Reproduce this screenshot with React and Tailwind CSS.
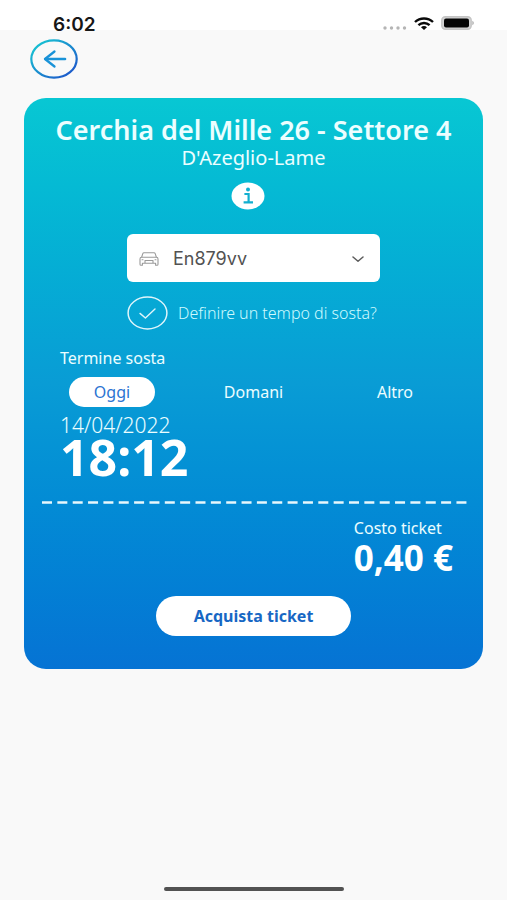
import { useState } from 'react';

const DAYS = ['Oggi', 'Domani', 'Altro'];

function StatusBar() {
  return (
    <div className="flex h-[30px] items-end justify-between bg-white pr-[33px] pl-[53px]">
      <span className="font-['Inter'] text-[19px] leading-[10px] font-semibold text-neutral-900">6:02</span>
      <div className="flex items-end gap-[7px]">
        <svg width="24" height="4" viewBox="0 0 24 4" fill="#b5b5b5">
          <circle cx="2" cy="2" r="1.7" />
          <circle cx="8.5" cy="2" r="1.7" />
          <circle cx="15" cy="2" r="1.7" />
          <circle cx="21.5" cy="2" r="1.7" />
        </svg>
        <svg width="20" height="13" viewBox="0 0 20 13" fill="none" stroke="#0a0a0a" strokeWidth="2.4">
          <path d="M1 5C6 0.3 14 0.3 19 5" />
          <path d="M4.4 8.2C7.6 5.2 12.4 5.2 15.6 8.2" />
          <path d="M7 10.2C8.6 8.6 11.4 8.6 13 10.2L10 13Z" fill="#0a0a0a" stroke="none" />
        </svg>
        <svg width="33" height="14" viewBox="0 0 33 14">
          <rect x="0.8" y="0.8" width="29.4" height="12.4" rx="3.5" fill="#d4d4d4" stroke="#c4c4c4" strokeWidth="1.4" />
          <rect x="3" y="2.6" width="25" height="8.8" rx="2" fill="#050505" />
          <path d="M31.3 4.8C33.3 5.6 33.3 8.4 31.3 9.2Z" fill="#b0b0b0" />
        </svg>
      </div>
    </div>
  );
}

function BackButton() {
  return (
    <button aria-label="Indietro" className="block">
      <svg width="48" height="40" viewBox="0 0 48 40" fill="none">
        <defs>
          <linearGradient id="ring" x1="0" y1="0" x2="1" y2="1">
            <stop offset="0.15" stopColor="#18bcd2" />
            <stop offset="0.85" stopColor="#1d5fcb" />
          </linearGradient>
        </defs>
        <ellipse cx="24" cy="20" rx="22.7" ry="18.7" stroke="url(#ring)" strokeWidth="2.2" />
        <path d="M24.5 12.5L15 20L24.5 27.5" stroke="#1a93d8" strokeWidth="2.3" strokeLinecap="round" strokeLinejoin="round" />
        <path d="M15.5 20H35" stroke="#1a93d8" strokeWidth="2.6" strokeLinecap="round" />
      </svg>
    </button>
  );
}

function VehicleSelect() {
  return (
    <div className="relative mx-auto mt-6 w-[253px]">
      <select
        aria-label="Veicolo"
        className="h-12 w-full appearance-none rounded-md bg-white pt-[2px] pl-[46px] font-['Inter'] text-lg text-neutral-600"
      >
        <option>En879vv</option>
      </select>
      <svg className="pointer-events-none absolute top-[18px] left-3" width="20" height="14" viewBox="0 0 20 14" fill="none" stroke="#9a9a9a" strokeWidth="1.1" strokeLinejoin="round">
        <path d="M2.6 5.3L3.8 1.6C4 1 4.4 0.7 5 0.7H15C15.6 0.7 16 1 16.2 1.6L17.4 5.3" />
        <path d="M2.6 5.3H17.4C18.4 5.3 19 6 19 7V12.2C19 12.9 18.6 13.3 18 13.3H16.6V11.2H3.4V13.3H2C1.4 13.3 1 12.9 1 12.2V7C1 6 1.6 5.3 2.6 5.3Z" />
        <path d="M6 11V8.5H14V11" />
        <path d="M2.6 7.8H4.4M15.6 7.8H17.4" />
      </svg>
      <svg className="pointer-events-none absolute top-[22px] right-4" width="12" height="7" viewBox="0 0 12 7" fill="none" stroke="#5c5c5c" strokeWidth="1.5" strokeLinecap="round" strokeLinejoin="round">
        <path d="M1 1L6 5.3L11 1" />
      </svg>
    </div>
  );
}

function DurationCheck() {
  return (
    <label className="mx-auto mt-[14px] flex w-[253px] items-center gap-[10px] whitespace-nowrap">
      <input type="checkbox" defaultChecked className="peer sr-only" />
      <svg className="shrink-0" width="41" height="34" viewBox="0 0 41 34" fill="none" stroke="#dff5fb">
        <ellipse cx="20.5" cy="17" rx="19.4" ry="15.9" strokeWidth="1.5" />
        <path d="M13 17.4L18.4 22L28 13" strokeWidth="1.4" strokeLinecap="round" strokeLinejoin="round" />
      </svg>
      <span className="text-base font-light text-cyan-100">Definire un tempo di sosta?</span>
    </label>
  );
}

export default function App() {
  const [day, setDay] = useState('Oggi');

  return (
    <div className="flex min-h-screen flex-col bg-[#f9f9f9] font-['Noto_Sans','Open_Sans',sans-serif]">
      <StatusBar />

      <header className="px-[30px] pt-[9px]">
        <BackButton />
      </header>

      <main className="mx-6 mt-[19px] rounded-[22px] bg-linear-to-b from-[#08c7d3] via-[#099cd5] to-[#0673d4] pb-[33px] text-white">
        <h1 className="pt-4 text-center text-[27px] leading-8 font-semibold whitespace-nowrap text-cyan-50">
          Cerchia del Mille 26 - Settore 4
        </h1>
        <p className="text-center text-[20px] leading-6 text-cyan-50">D'Azeglio-Lame</p>

        <button aria-label="Informazioni" className="mx-auto mt-3 block pr-3">
          <svg width="34" height="28" viewBox="0 0 34 28">
            <ellipse cx="17" cy="14" rx="16.5" ry="13.5" fill="#fff" />
            <circle cx="17" cy="7.6" r="2" fill="#12afd0" />
            <path d="M13.4 12H17.6V20.4M12.6 20.4H22" fill="none" stroke="#12afd0" strokeWidth="2.2" />
          </svg>
        </button>

        <VehicleSelect />
        <DurationCheck />

        <section className="px-9 pt-4">
          <h2 className="text-base leading-6 text-cyan-50">Termine sosta</h2>
          <div className="mt-[7px] grid grid-cols-[104px_1fr_104px] items-center">
            {DAYS.map((d) => (
              <button
                key={d}
                onClick={() => setDay(d)}
                aria-pressed={day === d}
                className={`mx-auto h-[30px] rounded-full text-base ${
                  day === d ? 'w-[86px] bg-white text-[#2b74d2]' : 'px-3 text-cyan-50'
                }`}
              >
                {d}
              </button>
            ))}
          </div>
          <p className="mt-[6px] text-[21px] leading-6 font-light text-cyan-50">14/04/2022</p>
          <p className="text-[50px] leading-10 font-bold">18:12</p>
        </section>

        <svg className="mt-6 block w-full px-4" height="3">
          <line x1="2" y1="1.5" x2="100%" y2="1.5" stroke="#e8f7fc" strokeWidth="2.6" strokeDasharray="10 5.35" />
        </svg>

        <section className="flex justify-end pt-3 pr-[30px]">
          <div>
            <p className="text-base leading-6 text-cyan-50">Costo ticket</p>
            <p className="text-[35px] leading-9 font-bold">0,40 €</p>
          </div>
        </section>

        <button className="mx-auto mt-5 block h-10 w-[195px] rounded-full bg-white text-base font-bold text-[#1767c4]">
          Acquista ticket
        </button>
      </main>

      <div className="mx-auto mt-auto mb-[9px] h-1 w-[180px] rounded-full bg-neutral-600" />
    </div>
  );
}
